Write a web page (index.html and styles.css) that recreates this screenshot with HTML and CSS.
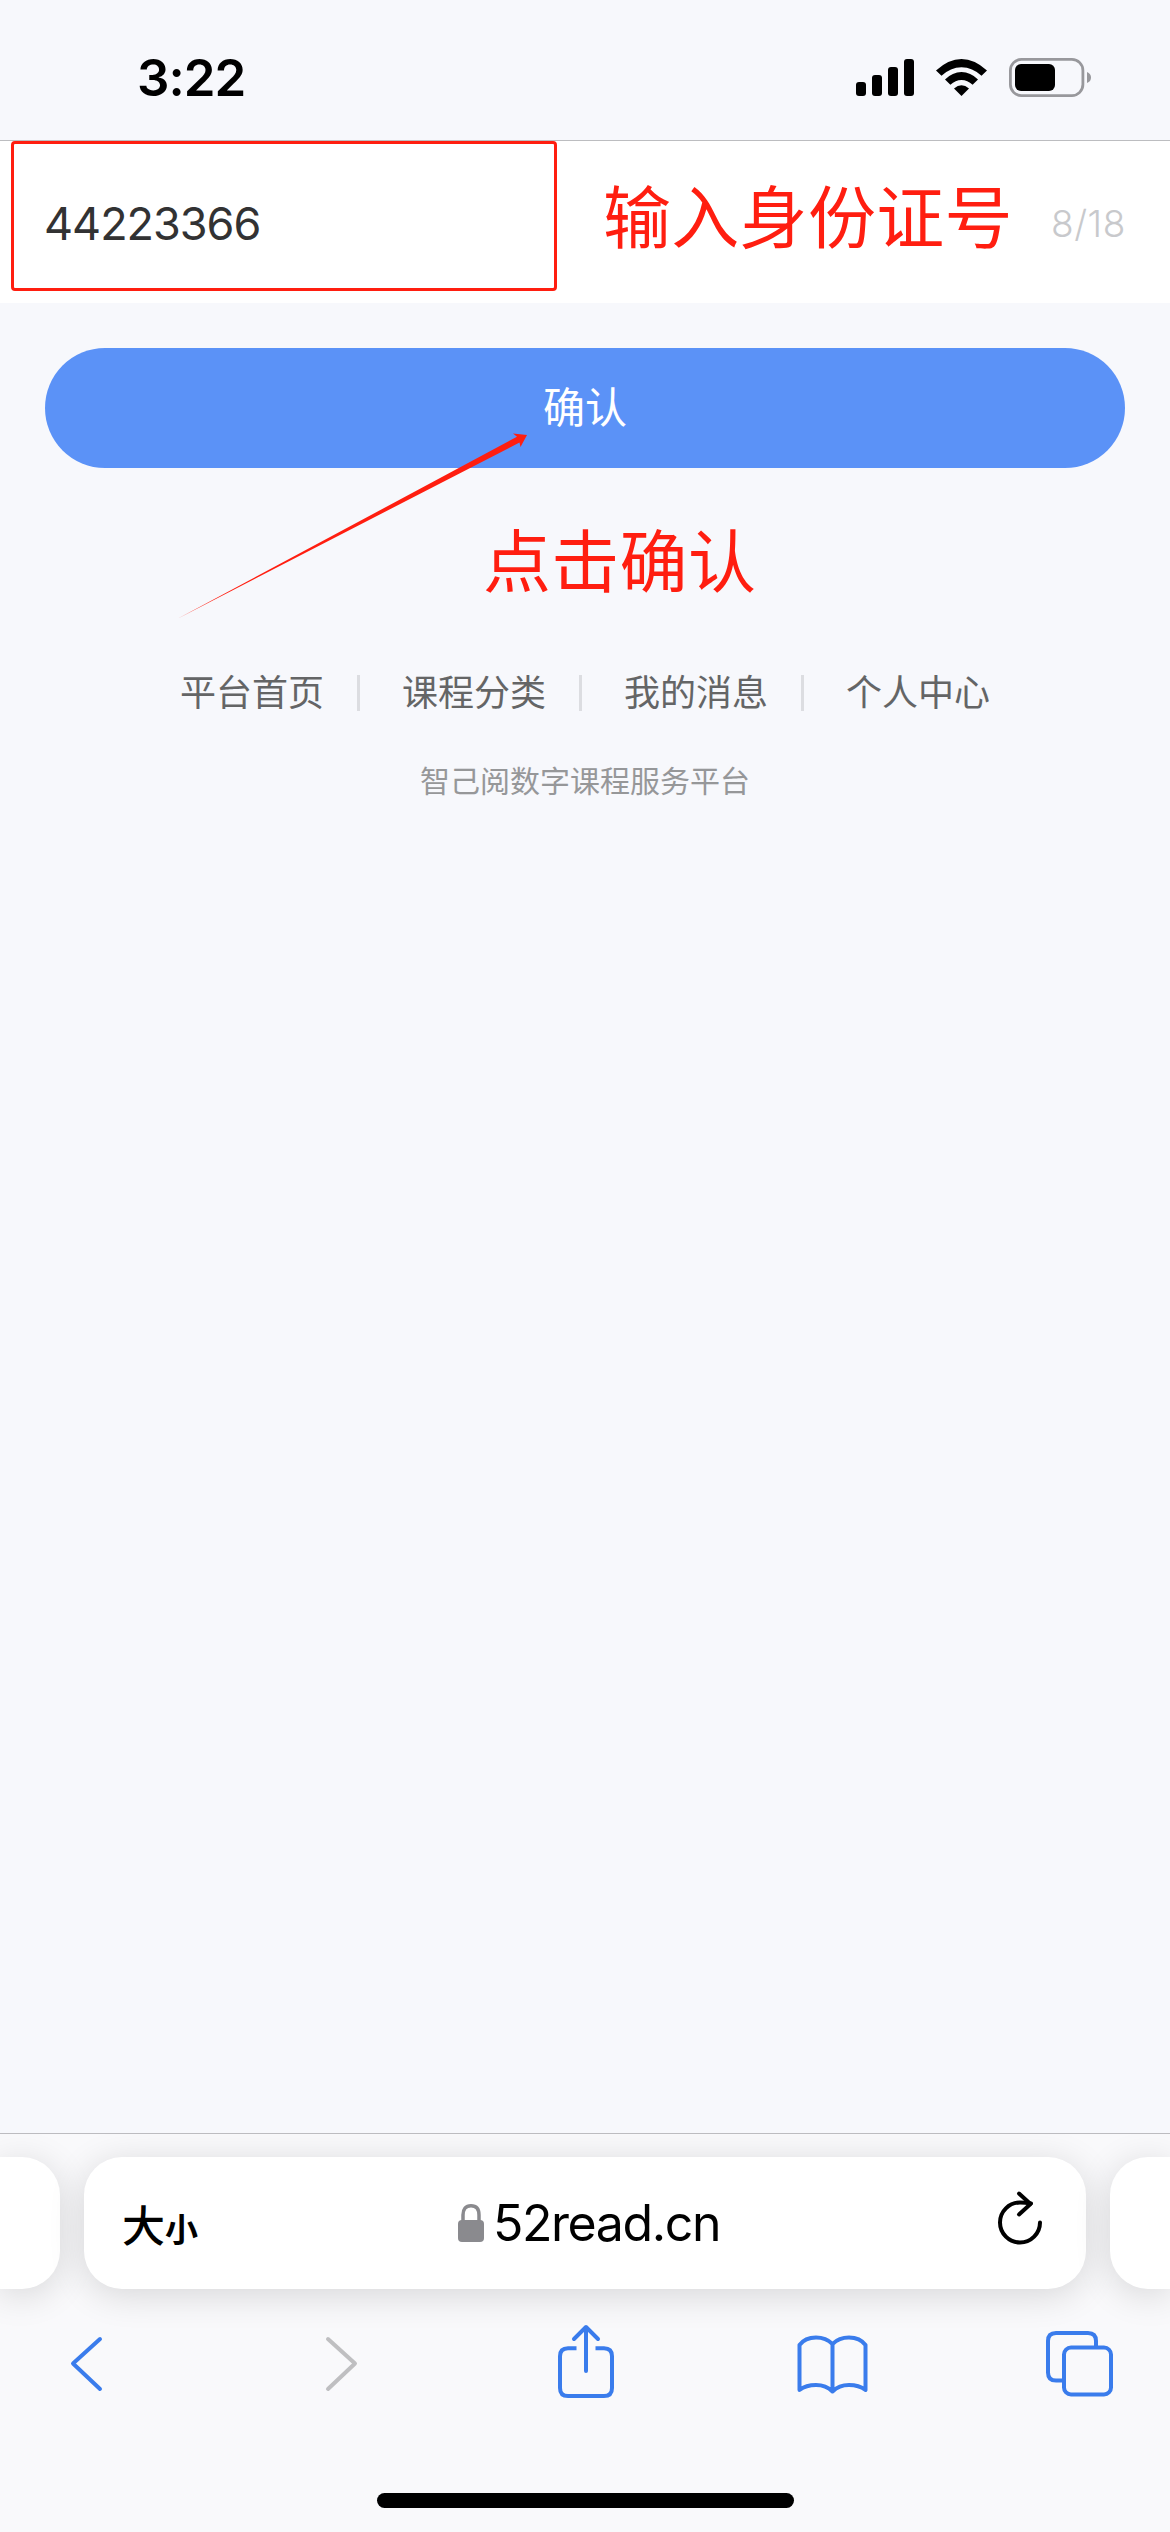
FILE: index.html
```html
<!DOCTYPE html>
<html lang="zh-CN">
<head>
	<meta charset="UTF-8">
	<title>智己阅数字课程服务平台</title>
	<link rel="stylesheet" href="styles.css">
</head>
<body>
	<div class="phone">
		<div class="status">
			<span class="time">3:22</span>
			<svg class="status-icons" width="236" height="40" viewBox="0 0 236 40">
				<!-- 信号 -->
				<rect x="0" y="25" width="10" height="14" rx="3"/>
				<rect x="16" y="18" width="10" height="21" rx="3"/>
				<rect x="32" y="10" width="10" height="29" rx="3"/>
				<rect x="48" y="2" width="10" height="37" rx="3"/>
				<!-- wifi -->
				<path d="M80 13.5 Q92.500 2 105.500 2 Q118.500 2 131 13.500 L125.500 18.800 Q116.500 10.200 105.500 10.200 Q94.500 10.200 85.500 18.800 Z"/>
				<path d="M89 22.500 Q96.500 15 105.500 15 Q114.500 15 122 22.500 L116.600 27.800 Q111.500 23 105.500 23 Q99.500 23 94.400 27.800 Z"/>
				<path d="M98 31.500 Q105.500 25.200 113 31.500 L105.500 39 Z"/>
				<!-- 电池 -->
				<rect class="battery" x="154.400" y="2.400" width="72.500" height="36.200" rx="11"/>
				<rect x="159" y="7" width="40" height="27" rx="6"/>
				<path class="battery-tip" d="M231 15 Q235 16.500 235 20.500 Q235 24.500 231 26 Z"/>
			</svg>
		</div>
		<div class="field">
			<span class="value">44223366</span>
			<span class="count">8/18</span>
			<div class="mark-box"></div>
			<div class="mark-text mark-input">输入身份证号</div>
		</div>
		<div class="main">
			<div class="surebtn">确认</div>
			<svg class="mark-arrow" width="356" height="190" viewBox="0 0 356 190">
				<path d="M4 187 L344 4.800 L340 1.500 L354 3 L347.500 15 L346.500 10.500 Z"/>
			</svg>
			<div class="mark-text mark-sure">点击确认</div>
			<ul class="nav">
				<li>平台首页</li>
				<li>课程分类</li>
				<li>我的消息</li>
				<li>个人中心</li>
			</ul>
			<div class="copy">智己阅数字课程服务平台</div>
		</div>
		<div class="browser">
			<div class="tabs">
				<div class="tab side"></div>
				<div class="tab address">
					<span class="size">大<small>小</small></span>
					<span class="url">
						<svg class="lock" width="26" height="38" viewBox="0 0 26 38">
							<path d="M5 18 V11 Q5 1.800 13 1.800 Q21 1.800 21 11 V18"/>
							<rect x="0" y="16" width="26" height="22" rx="4"/>
						</svg>
						<span>52read.cn</span>
					</span>
					<svg class="reload" width="48" height="58" viewBox="0 0 48 58">
						<path d="M44 30.500 A20 20 0 1 1 24 10.500 Q29 10.500 35 11.500"/>
						<path d="M23 1.500 L34.500 12 L23 22.500"/>
					</svg>
				</div>
				<div class="tab side"></div>
			</div>
			<div class="toolbar">
				<svg width="72" height="72" viewBox="0 0 72 72">
					<path d="M50 11 L23 35.500 L50 61"/>
				</svg>
				<svg class="off" width="72" height="72" viewBox="0 0 72 72">
					<path d="M30 11 L57 35.500 L30 61"/>
				</svg>
				<svg width="72" height="72" viewBox="0 0 72 72">
					<path d="M39 43 V0 M27 11 L39 -1 L51 11"/>
					<path class="butt" d="M29.500 20.200 H21 Q13 20.200 13 28.200 V60 Q13 68 21 68 H57 Q65 68 65 60 V28.200 Q65 20.200 57 20.200 H48.500"/>
				</svg>
				<svg width="72" height="72" viewBox="0 0 72 72">
					<path d="M37.500 16 Q31 9.500 21 9.500 Q10 9.500 4.500 17 V62 Q11 57 21 57 Q31 57 37.500 63.500 Q44 57 54 57 Q64 57 70.500 62 V17 Q65 9.500 54 9.500 Q44 9.500 37.500 16 V63.500"/>
				</svg>
				<svg width="72" height="72" viewBox="0 0 72 72">
					<path class="butt" d="M20 52.500 H13 Q5 52.500 5 44.500 V13 Q5 5 13 5 H45 Q53 5 53 13 V19"/>
					<rect x="21" y="19.500" width="47" height="47" rx="7"/>
				</svg>
			</div>
			<div class="home"></div>
		</div>
	</div>
</body>
</html>
```
FILE: styles.css
```css
*{
	box-sizing: border-box;
}
body{
	margin: 0;
	background-color: #f7f8fc;
	font-family: Inter, "Noto Sans CJK SC", sans-serif;
}
ul,li{
	margin: 0;
	padding: 0;
	list-style: none;
}
svg{
	display: block;
	flex: none;
}
.phone{
	width: 1170px;
	height: 2532px;
	display: flex;
	flex-direction: column;
	overflow: hidden;
}

/* 状态栏 */
.status{
	height: 141px;
	padding: 57px 78px 0 137px;
	display: flex;
	justify-content: space-between;
	align-items: flex-start;
	border-bottom: 1px solid #bcbdc0;
}
.time{
	font-size: 51px;
	font-weight: 600;
	line-height: 42px;
	letter-spacing: -1px;
}
.battery{
	fill: none;
	stroke: #98989c;
	stroke-width: 2.800;
}
.battery-tip{
	fill: #98989c;
}

/* 输入框 */
.field{
	position: relative;
	height: 162px;
	padding: 3px 44px 0;
	display: flex;
	justify-content: space-between;
	align-items: center;
	background-color: #fff;
}
.value{
	font-size: 45px;
	color: #323233;
	letter-spacing: -1px;
}
.count{
	font-size: 37px;
	font-weight: 300;
	color: #c8c9cc;
	letter-spacing: 0.600px;
}

/* 红色标注 */
.mark-box{
	position: absolute;
	left: 11px;
	top: 0;
	width: 546px;
	height: 150px;
	border: 3px solid #ff1e10;
	border-radius: 4px;
}
.mark-text{
	position: absolute;
	font-size: 68px;
	line-height: 80px;
	letter-spacing: 0.300px;
	color: #ff1e10;
	white-space: nowrap;
}
.mark-input{
	left: 603px;
	top: 37px;
}
.mark-sure{
	left: 483px;
	top: 219px;
}
.mark-arrow{
	position: absolute;
	left: 173px;
	top: 129px;
	fill: #ff1e10;
}

.main{
	position: relative;
	flex: 1;
	padding: 45px 45px 0;
}
.surebtn{
	height: 120px;
	border-radius: 60px;
	background-color: #5b92f7;
	color: #fff;
	font-size: 42px;
	line-height: 120px;
	text-align: center;
}
.nav{
	margin-top: 198px;
	display: flex;
	justify-content: center;
	color: #646566;
	font-size: 36px;
	line-height: 54px;
}
.nav li{
	display: flex;
	align-items: center;
}
.nav li:not(:last-child):after{
	content: '';
	width: 3px;
	height: 36px;
	margin: 0 42px 0 33px;
	background-color: #dcdde1;
}
.copy{
	margin-top: 39px;
	color: #969799;
	font-size: 30px;
	line-height: 44px;
	text-align: center;
}

/* 浏览器底部 */
.browser{
	height: 399px;
	border-top: 1px solid #bcbcc0;
	background-color: #f9f9fb;
	overflow: hidden;
}
.tabs{
	margin-top: 23px;
	display: flex;
	gap: 24px;
}
.tab{
	height: 132px;
	background-color: #fff;
	border-radius: 38px;
	box-shadow: 0 6px 36px rgba(0, 0, 0, 0.14);
}
.side{
	width: 60px;
}
.side:first-child{
	border-radius: 0 38px 38px 0;
}
.side:last-child{
	border-radius: 38px 0 0 38px;
}
.address{
	width: 1002px;
	padding: 0 42px 0 38px;
	display: flex;
	justify-content: space-between;
	align-items: center;
}
.size{
	width: 60px;
	font-size: 43px;
	font-weight: 500;
	white-space: nowrap;
}
.size small{
	font-size: 33px;
	font-weight: 700;
}
.url{
	display: flex;
	align-items: center;
	gap: 9px;
	font-size: 50px;
	letter-spacing: -1.400px;
}
.lock{
	fill: #8a8a8e;
}
.lock path{
	fill: none;
	stroke: #8a8a8e;
	stroke-width: 3.500;
}
.reload,.toolbar svg{
	fill: none;
	stroke: #000;
	stroke-width: 4;
	stroke-linecap: round;
	stroke-linejoin: round;
	overflow: visible;
}
.reload{
	margin-bottom: 4px;
}
.toolbar{
	margin-top: 39px;
	padding: 0 55px 0 50px;
	display: flex;
	justify-content: space-between;
}
.toolbar svg{
	stroke: #3a7cec;
}
.toolbar .off{
	stroke: #bfbfc1;
}
.toolbar .butt{
	stroke-linecap: butt;
}
.home{
	width: 417px;
	height: 15px;
	margin: 93px auto 0;
	border-radius: 8px;
	background-color: #000;
}
```
